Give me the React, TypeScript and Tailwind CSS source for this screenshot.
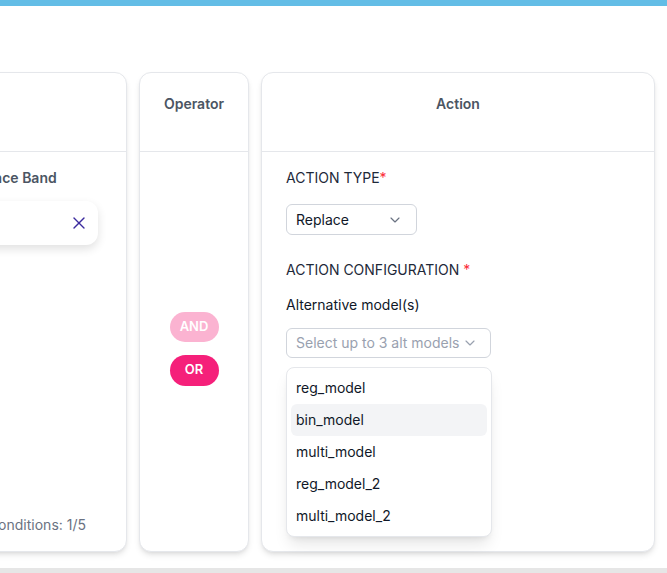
import { ChevronDown, X } from "lucide-react";

const models = ["reg_model", "bin_model", "multi_model", "reg_model_2", "multi_model_2"];

function CardHeader({ title }: { title: string }) {
  return (
    <div className="h-[79px] border-b border-gray-200 pt-[21px] text-center text-sm font-semibold text-[#4b5563]">
      {title}
    </div>
  );
}

export default function App() {
  const active = "bin_model";
  return (
    <div className="h-[573px] w-[667px] overflow-hidden bg-white font-['Inter',sans-serif] flex flex-col">
      <div className="h-[6px] bg-[#63bde6]" />
      <div className="flex gap-3 pt-[66px] -ml-[83px]">
        {/* condition card, cut off at the left */}
        <div className="flex h-[480px] w-[210px] shrink-0 flex-col rounded-xl border border-gray-200 bg-white shadow-md">
          <CardHeader title="" />
          <div className="flex flex-1 flex-col pl-[22px] pr-7 pt-4 pb-4">
            <p className="whitespace-nowrap text-sm font-semibold leading-5 text-[#4b5563]">Confidence Band</p>
            <div className="mt-[13px] flex h-11 items-center justify-end rounded-xl bg-white pr-[9px] shadow-[0_4px_10px_rgba(0,0,0,0.12)]">
              <X className="h-5 w-5 text-[#3b2b9e]" strokeWidth={1.6} />
            </div>
            <div className="mt-auto flex justify-end pr-3 text-sm leading-5 text-gray-500">Conditions: 1/5</div>
          </div>
        </div>

        {/* operator */}
        <div className="flex h-[480px] w-[110px] shrink-0 flex-col rounded-xl border border-gray-200 bg-white shadow-md">
          <CardHeader title="Operator" />
          <div className="flex flex-1 flex-col items-center justify-center gap-[13px] pb-[6px]">
            <button className="h-[30px] w-[49px] rounded-full bg-[#fbb3d1] text-[13px] font-semibold text-white">AND</button>
            <button className="h-[31px] w-[49px] rounded-full bg-[#f5207a] text-[13px] font-semibold text-white">OR</button>
          </div>
        </div>

        {/* action */}
        <div className="flex h-[480px] w-[394px] shrink-0 flex-col rounded-xl border border-gray-200 bg-white shadow-md">
          <CardHeader title="Action" />
          <div className="px-6 pt-4">
            <p className="text-sm leading-5 text-gray-800">
              ACTION TYPE<span className="text-red-500">*</span>
            </p>
            <div className="mt-4 flex h-[31px] w-[131px] items-center justify-between rounded-md border border-gray-300 pl-[9px] pr-[13px] text-sm text-gray-900">
              <span>Replace</span>
              <ChevronDown className="h-4 w-4 text-gray-500" strokeWidth={1.75} />
            </div>
            <p className="mt-[25px] text-sm leading-5 text-gray-800">
              ACTION CONFIGURATION <span className="text-red-500">*</span>
            </p>
            <p className="mt-[15px] text-sm leading-5 text-gray-900">Alternative model(s)</p>
            <div className="relative mt-[13px] w-[205px]">
              <div className="flex h-[30px] items-center justify-between whitespace-nowrap rounded-md border border-gray-300 pl-[9px] pr-[12px] text-sm text-gray-400">
                <span>Select up to 3 alt models</span>
                <ChevronDown className="h-4 w-4 shrink-0 text-gray-400" strokeWidth={1.75} />
              </div>
              <ul className="absolute left-0 top-[39px] w-[206px] rounded-lg border border-gray-200 bg-white p-1 shadow-lg">
                {models.map(m => (
                  <li
                    key={m}
                    className={`flex h-8 items-center rounded-md px-[5px] text-sm text-gray-900 ${m === active ? "bg-gray-100" : ""}`}
                  >
                    {m}
                  </li>
                ))}
              </ul>
            </div>
          </div>
        </div>
      </div>
      <div className="mt-auto h-[5px] bg-[#e6e6e6]" />
    </div>
  );
}
